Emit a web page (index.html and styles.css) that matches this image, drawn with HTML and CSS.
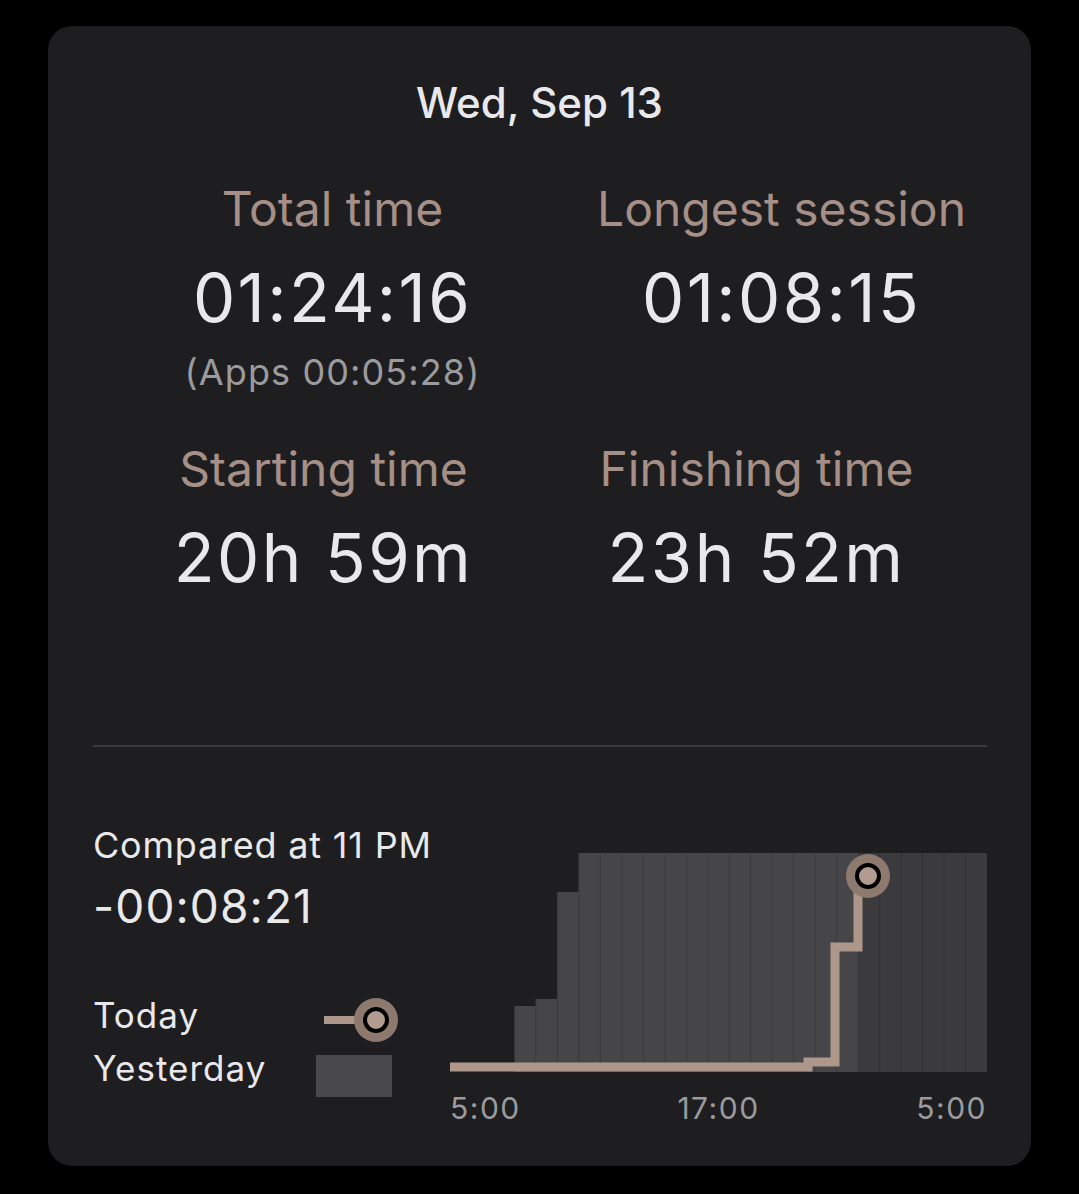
FILE: index.html
```html
<!DOCTYPE html>
<html lang="en">
<head>
<meta charset="utf-8">
<title>Daily summary</title>
<link rel="stylesheet" href="styles.css">
</head>
<body>
<div class="card">
  <div class="date">Wed, Sep 13</div>

  <div class="stats stats-top">
    <div class="stat">
      <div class="stat-label">Total time</div>
      <div class="stat-value">01:24:16</div>
      <div class="stat-sub">(Apps 00:05:28)</div>
    </div>
    <div class="stat">
      <div class="stat-label">Longest session</div>
      <div class="stat-value">01:08:15</div>
    </div>
  </div>

  <div class="stats stats-bottom">
    <div class="stat">
      <div class="stat-label">Starting time</div>
      <div class="stat-value">20h 59m</div>
    </div>
    <div class="stat">
      <div class="stat-label">Finishing time</div>
      <div class="stat-value">23h 52m</div>
    </div>
  </div>

  <div class="divider"></div>

  <div class="compare">
    <div class="compare-info">
      <div class="compare-title">Compared at 11 PM</div>
      <div class="compare-value">-00:08:21</div>
      <div class="legend">
        <div class="legend-label">Today</div>
        <svg class="legend-today" width="78" height="46" viewBox="0 0 78 46">
          <line x1="2" y1="23" x2="52" y2="23" stroke="#ad978b" stroke-width="8"/>
          <circle cx="54" cy="23" r="22" fill="#8e796f"/>
          <circle cx="54" cy="23" r="11" fill="#b29c90" stroke="#000" stroke-width="4"/>
        </svg>
        <div class="legend-label">Yesterday</div>
        <div class="legend-yesterday"></div>
      </div>
    </div>

    <div class="chart">
      <svg class="chart-svg" width="537" height="225" viewBox="0 0 537 225">
        <rect x="64.44" y="156" width="21.48" height="66" fill="#464648"/>
        <rect x="85.92" y="149" width="21.48" height="73" fill="#464648"/>
        <rect x="107.4" y="42" width="21.48" height="180" fill="#464648"/>
        <rect x="128.88" y="3" width="279.24" height="219" fill="#464648"/>
        <rect x="408.12" y="3" width="128.88" height="219" fill="#3b3b3d"/>
        <g stroke="#3c3c3e" stroke-width="1">
          <line x1="85.92" y1="149" x2="85.92" y2="222"/>
          <line x1="107.4" y1="42" x2="107.4" y2="222"/>
          <line x1="128.88" y1="3" x2="128.88" y2="222"/>
          <line x1="150.36" y1="3" x2="150.36" y2="222"/>
          <line x1="171.84" y1="3" x2="171.84" y2="222"/>
          <line x1="193.32" y1="3" x2="193.32" y2="222"/>
          <line x1="214.8" y1="3" x2="214.8" y2="222"/>
          <line x1="236.28" y1="3" x2="236.28" y2="222"/>
          <line x1="257.76" y1="3" x2="257.76" y2="222"/>
          <line x1="279.24" y1="3" x2="279.24" y2="222"/>
          <line x1="300.72" y1="3" x2="300.72" y2="222"/>
          <line x1="322.2" y1="3" x2="322.2" y2="222"/>
          <line x1="343.68" y1="3" x2="343.68" y2="222"/>
          <line x1="365.16" y1="3" x2="365.16" y2="222"/>
          <line x1="386.64" y1="3" x2="386.64" y2="222"/>
        </g>
        <g stroke="#333335" stroke-width="1">
          <line x1="429.6" y1="3" x2="429.6" y2="222"/>
          <line x1="451.08" y1="3" x2="451.08" y2="222"/>
          <line x1="472.56" y1="3" x2="472.56" y2="222"/>
          <line x1="494.04" y1="3" x2="494.04" y2="222"/>
          <line x1="515.52" y1="3" x2="515.52" y2="222"/>
        </g>
        <path d="M0 217 H358 V212 H385 V97 H408 V26" fill="none" stroke="#ad978b" stroke-width="9"/>
        <circle cx="418" cy="26" r="22" fill="#8e796f"/>
        <circle cx="418" cy="26" r="11" fill="#b29c90" stroke="#000" stroke-width="4"/>
      </svg>
      <div class="chart-axis">
        <span>5:00</span>
        <span>17:00</span>
        <span>5:00</span>
      </div>
    </div>
  </div>
</div>
</body>
</html>
```

FILE: styles.css
```css
* {
  box-sizing: border-box;
}

html,
body {
  margin: 0;
  padding: 0;
  background: #000;
}

body {
  font-family: Inter, "Noto Sans", "Liberation Sans", sans-serif;
  color: #e9e9eb;
  padding-top: 26px;
}

.card {
  margin: 0 48px;
  height: 1140px;
  background: #1e1e20;
  border-radius: 24px;
  padding-top: 52px;
  overflow: hidden;
}

.date {
  text-align: center;
  font-size: 42px;
  line-height: 50px;
  font-weight: 500;
}

.stats {
  display: grid;
}

.stats-top {
  grid-template-columns: 449px 449px;
  margin: 53px 0 0 60px;
}

.stats-bottom {
  grid-template-columns: 433px 433px;
  margin: 49px 0 0 59px;
}

.stat {
  text-align: center;
}

.stat-label {
  font-size: 48px;
  line-height: 56px;
  color: #a58f86;
}

.stat-value {
  margin-top: 21px;
  font-size: 67px;
  line-height: 80px;
  letter-spacing: 2.4px;
}

.stat-sub {
  margin-top: 14px;
  font-size: 36px;
  line-height: 40px;
  letter-spacing: 1.1px;
  color: #9b9b9d;
}

.divider {
  margin: 147px 44px 0 45px;
  height: 2px;
  background: #3a3a3c;
}

.compare {
  display: flex;
  margin: 77px 44px 0 45px;
}

.compare-info {
  flex: 1;
}

.compare-title {
  font-size: 36px;
  line-height: 42px;
  letter-spacing: 0.8px;
}

.compare-value {
  margin-top: 13px;
  font-size: 46px;
  line-height: 54px;
  letter-spacing: 1.1px;
}

.legend {
  margin-top: 57px;
  display: grid;
  grid-template-columns: 223px 1fr;
  grid-auto-rows: 53px;
}

.legend-label {
  font-size: 35px;
  line-height: 50px;
  letter-spacing: 1px;
}

.legend-today {
  display: block;
  margin: 7px 0 0 6px;
}

.legend-yesterday {
  margin-top: 12px;
  width: 76px;
  height: 42px;
  background: #49494b;
}

.chart {
  width: 537px;
  margin-top: 26px;
}

.chart-svg {
  display: block;
}

.chart-axis {
  margin-top: 16px;
  display: flex;
  justify-content: space-between;
  font-size: 30px;
  line-height: 34px;
  letter-spacing: 1.5px;
  color: #9b9b9d;
}
```
